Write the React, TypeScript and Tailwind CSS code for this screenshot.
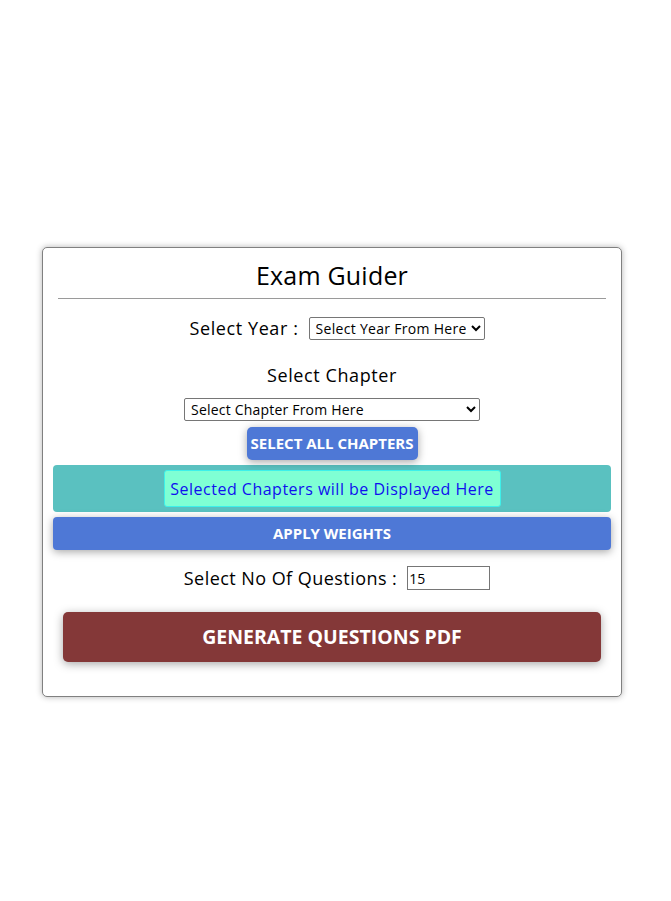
export default function App() {
  return (
    <div className="min-h-screen bg-white pt-[247px] font-['Open_Sans',sans-serif] text-black">
      <div className="ml-[42px] w-[580px] rounded-[5px] border border-[#808080] bg-white px-[10px] pb-[34px] pt-[9px] shadow-[0_0_6px_rgba(0,0,0,0.3)]">
        <h1 className="text-center text-[25px] leading-[36px] tracking-[0.2px]">Exam Guider</h1>
        <hr className="mx-[5px] mt-[5px] border-t border-[#9a9a9a]" />

        <div className="mt-[16px] flex items-center justify-center gap-[10px] pl-[10px]">
          <span className="text-[18px] leading-[26px] tracking-[0.6px]">Select Year :</span>
          <select className="h-[23px] w-[176px] rounded-[2px] border border-[#767676] px-[2px] text-[14px] tracking-[0.3px]">
            <option>Select Year From Here</option>
          </select>
        </div>

        <p className="mt-[21px] text-center text-[18px] leading-[26px] tracking-[0.6px]">Select Chapter</p>
        <div className="mt-[10px] flex justify-center">
          <select className="h-[23px] w-[296px] rounded-[2px] border border-[#767676] px-[2px] text-[14px] tracking-[0.2px]">
            <option>Select Chapter From Here</option>
          </select>
        </div>

        <div className="mt-[6px] flex justify-center">
          <button className="h-[33px] w-[171px] rounded-[5px] bg-[#4e78d6] text-[15px] font-bold uppercase text-white shadow-[0_2px_8px_rgba(0,0,0,0.35)]">
            Select All Chapters
          </button>
        </div>

        <div className="mt-[5px] flex h-[47px] items-center justify-center rounded-[4px] bg-[#5ac1c0]">
          <div className="flex h-[37px] w-[337px] items-center justify-center rounded-[3px] border border-[#3df0ea] bg-[#7fffd4] text-[16px] tracking-[0.5px] text-[#1010ee]">
            Selected Chapters will be Displayed Here
          </div>
        </div>

        <button className="mt-[5px] h-[33px] w-full rounded-[4px] bg-[#4e78d6] text-[15px] font-bold uppercase text-white shadow-[0_2px_8px_rgba(0,0,0,0.35)]">
          Apply Weights
        </button>

        <div className="mt-[15px] flex items-center justify-center gap-[10px] pl-[10px]">
          <span className="text-[18px] leading-[26px] tracking-[0.45px]">Select No Of Questions :</span>
          <input
            defaultValue="15"
            className="h-[24px] w-[83px] border border-[#767676] px-[1px] text-[14px]"
          />
        </div>

        <div className="mt-[21px] px-[10px]">
          <button className="h-[50px] w-full rounded-[5px] bg-[#843838] text-[19.5px] font-bold uppercase text-white shadow-[0_2px_10px_rgba(0,0,0,0.35)]">
            Generate Questions PDF
          </button>
        </div>
      </div>
    </div>
  );
}
